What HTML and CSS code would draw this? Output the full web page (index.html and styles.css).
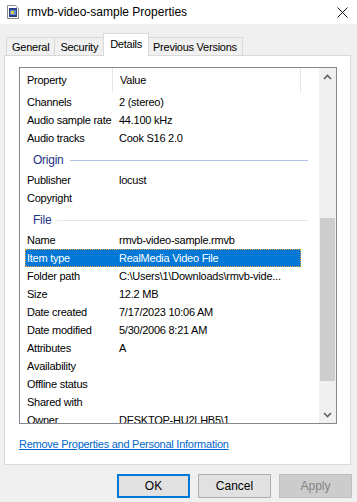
FILE: index.html
```html
<!DOCTYPE html>
<html lang="en">
<head>
  <meta charset="UTF-8">
  <title>rmvb-video-sample Properties</title>
  <link rel="stylesheet" href="styles.css">
</head>
<body>
  <div class="window">
    <div class="titlebar">
      <svg class="file-icon" width="12" height="14" viewBox="0 0 12 14">
        <path d="M0.5 0.5 H8.5 L11.5 3.5 V13.5 H0.5 Z" fill="#fff" stroke="#8a8a8a"/>
        <rect x="2" y="3" width="8" height="9" fill="#2a3f86"/>
        <rect x="3" y="5" width="6" height="5" fill="#5b8fd1"/>
        <rect x="4" y="6" width="3" height="3" fill="#e9c94a"/>
      </svg>
      <span class="title">rmvb-video-sample Properties</span>
      <svg class="close" width="11" height="11" viewBox="0 0 11 11">
        <path d="M0.5 0.5 L10.5 10.5 M10.5 0.5 L0.5 10.5" stroke="#111" stroke-width="1"/>
      </svg>
    </div>

    <div class="tabs">
      <div class="tab">General</div>
      <div class="tab">Security</div>
      <div class="tab active">Details</div>
      <div class="tab">Previous Versions</div>
    </div>

    <div class="panel">
      <div class="list">
        <div class="list-body">
          <div class="list-header">
            <div class="hcell prop">Property</div>
            <div class="hcell value">Value</div>
          </div>
          <div class="row"><span class="prop">Channels</span><span>2 (stereo)</span></div>
          <div class="row"><span class="prop">Audio sample rate</span><span>44.100 kHz</span></div>
          <div class="row"><span class="prop">Audio tracks</span><span>Cook S16 2.0</span></div>
          <div class="group focus"><span>Origin</span><i></i></div>
          <div class="row"><span class="prop">Publisher</span><span>locust</span></div>
          <div class="row"><span class="prop">Copyright</span><span></span></div>
          <div class="group"><span>File</span><i></i></div>
          <div class="row"><span class="prop">Name</span><span>rmvb-video-sample.rmvb</span></div>
          <div class="row selected"><span class="prop">Item type</span><span>RealMedia Video File</span></div>
          <div class="row"><span class="prop">Folder path</span><span>C:\Users\1\Downloads\rmvb-vide...</span></div>
          <div class="row"><span class="prop">Size</span><span>12.2 MB</span></div>
          <div class="row"><span class="prop">Date created</span><span>7/17/2023 10:06 AM</span></div>
          <div class="row"><span class="prop">Date modified</span><span>5/30/2006 8:21 AM</span></div>
          <div class="row"><span class="prop">Attributes</span><span>A</span></div>
          <div class="row"><span class="prop">Availability</span><span></span></div>
          <div class="row"><span class="prop">Offline status</span><span></span></div>
          <div class="row"><span class="prop">Shared with</span><span></span></div>
          <div class="row"><span class="prop">Owner</span><span>DESKTOP-HU2LHB5\1</span></div>
        </div>
        <div class="scrollbar">
          <div class="arrow">
            <svg width="9" height="6" viewBox="0 0 9 6"><path d="M1 5 L4.5 1.5 L8 5" fill="none" stroke="#606060" stroke-width="1.6"/></svg>
          </div>
          <div class="track"><div class="thumb"></div></div>
          <div class="arrow">
            <svg width="9" height="6" viewBox="0 0 9 6"><path d="M1 1 L4.5 4.5 L8 1" fill="none" stroke="#606060" stroke-width="1.6"/></svg>
          </div>
        </div>
      </div>
      <a class="link" href="#">Remove Properties and Personal Information</a>
    </div>

    <div class="buttons">
      <button class="default">OK</button>
      <button>Cancel</button>
      <button disabled>Apply</button>
    </div>
  </div>
</body>
</html>
```

FILE: styles.css
```css
body {
  margin: 0;
  font-family: 'Liberation Sans', Arial, sans-serif;
  font-size: 11px;
  letter-spacing: -0.25px;
  color: #000;
  background-color: #f0f0f0;
}
.window {
  width: 357px;
  height: 502px;
  overflow: hidden;
  background-color: #f0f0f0;
}
.titlebar {
  height: 24px;
  background-color: #fff;
  display: flex;
  align-items: center;
  padding-left: 7px;
}
.file-icon {
  margin-right: 8px;
}
.title {
  font-size: 12px;
  letter-spacing: 0;
  flex: 1;
}
.close {
  margin-right: 9px;
}
.tabs {
  display: flex;
  align-items: flex-end;
  height: 22px;
  margin-top: 9px;
  padding-left: 6px;
  position: relative;
  z-index: 1;
}
.tab {
  height: 17px;
  line-height: 18px;
  padding: 0 5px;
  border: 1px solid #d9d9d9;
  border-bottom: none;
  margin-left: -1px;
  background-color: #f0f0f0;
}
.tab:first-child {
  margin-left: 0;
}
.tab.active {
  height: 22px;
  line-height: 20px;
  padding: 0 6px;
  background-color: #fff;
  margin-bottom: -1px;
  margin-right: -1px;
  margin-left: -1px;
  position: relative;
}
.panel {
  margin: 0 6px 0 4px;
  height: 410px;
  border: 1px solid #d9d9d9;
  background-color: #fff;
  padding: 11px 13px 0 14px;
  box-sizing: border-box;
}
.list {
  display: flex;
  height: 357px;
  border: 1px solid #828790;
  box-sizing: border-box;
  overflow: hidden;
}
.list-body {
  flex: 1;
  overflow: hidden;
}
.list-header {
  display: flex;
  height: 25px;
}
.hcell {
  line-height: 25px;
  padding-left: 7px;
  box-sizing: border-box;
  border-right: 1px solid #e5e5e5;
}
.hcell.prop {
  width: 93px;
}
.hcell.value {
  width: 188px;
}
.row {
  display: flex;
  height: 18px;
  line-height: 18px;
  margin-left: 5px;
  width: 276px;
  padding-left: 2px;
  box-sizing: border-box;
  white-space: nowrap;
}
.row .prop {
  width: 92px;
  flex-shrink: 0;
}
.row.selected {
  background-color: #0078d7;
  color: #fff;
  outline: 1px dotted #f0a040;
  outline-offset: -1px;
}
.group {
  display: flex;
  align-items: center;
  height: 24px;
  padding-left: 13px;
  padding-top: 2px;
  width: 288px;
  box-sizing: border-box;
  color: #1e3287;
  font-size: 12px;
}
.group i {
  flex: 1;
  height: 1px;
  margin-left: 6px;
  background-color: #e2e6ee;
}
.group.focus i {
  background-color: #b1c4e8;
}
.scrollbar {
  width: 17px;
  display: flex;
  flex-direction: column;
  background-color: #f0f0f0;
}
.arrow {
  height: 17px;
  display: flex;
  align-items: center;
  justify-content: center;
}
.track {
  flex: 1;
  padding-top: 133px;
}
.thumb {
  margin: 0 1px;
  height: 163px;
  background-color: #cdcdcd;
}
.link {
  display: block;
  margin-top: 13px;
  color: #0066cc;
  text-decoration: underline;
  line-height: 15px;
}
.buttons {
  display: flex;
  justify-content: flex-end;
  gap: 8px;
  margin-top: 9px;
  padding-right: 5px;
}
button {
  width: 73px;
  height: 24px;
  font-family: inherit;
  font-size: 12px;
  letter-spacing: 0;
  background-color: #e1e1e1;
  border: 1px solid #adadad;
  color: #000;
  padding: 0;
}
button.default {
  border: 2px solid #0078d7;
}
button:disabled {
  background-color: #cccccc;
  border-color: #bfbfbf;
  color: #838383;
}
```
